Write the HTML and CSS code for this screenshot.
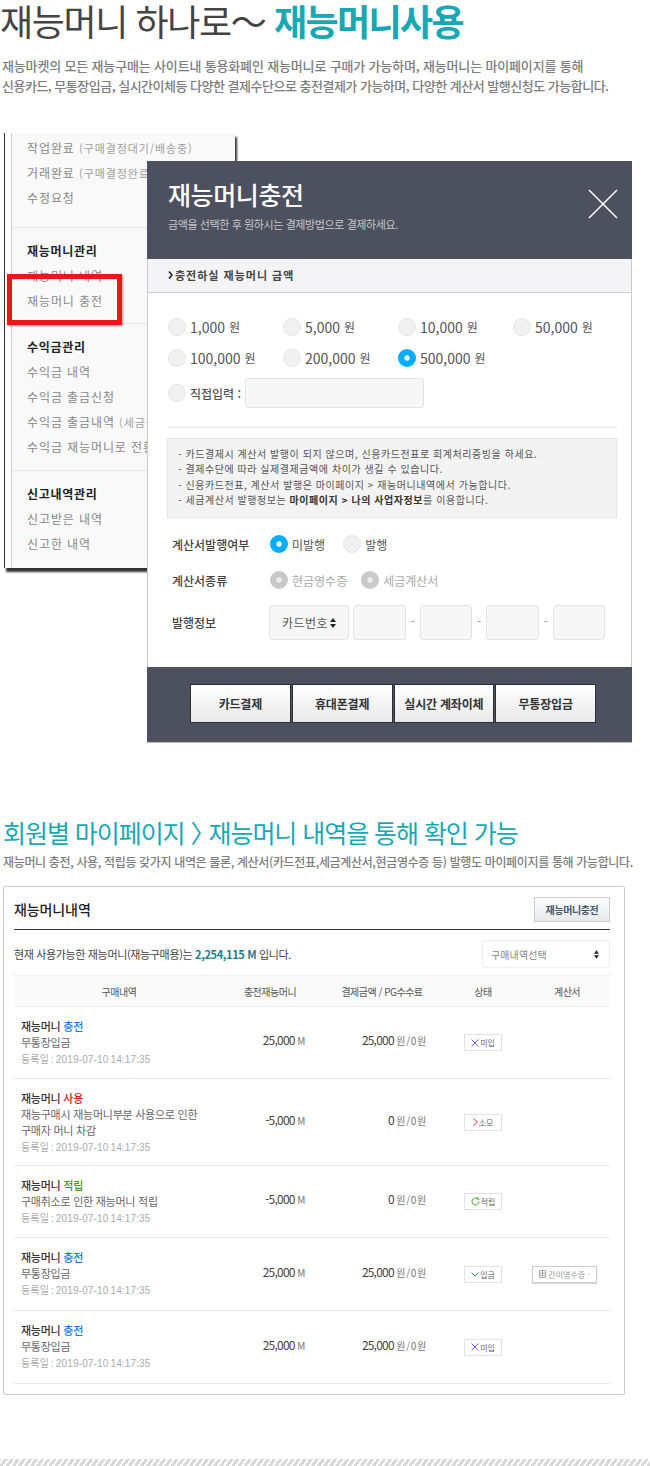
FILE: index.html
```html
<!DOCTYPE html>
<html lang="ko">
<head>
<meta charset="utf-8">
<meta name="viewport" content="width=device-width, initial-scale=1">
<link rel="stylesheet" href="styles.css">
</head>
<body>

<div class="hero">
  <h1>재능머니 하나로〜 <b>재능머니사용</b></h1>
  <p><span class="loose">재능마켓의 모든 재능구매는 사이트내 통용화폐인 재능머니로 구매가 가능하며, 재능머니는 마이페이지를 통해</span><br>
  신용카드, 무통장입금, 실시간이체등 다양한 결제수단으로 충전결제가 가능하며, 다양한 계산서 발행신청도 가능합니다.</p>
</div>

<div class="stage">
  <div class="menu">
    <ul class="menu-group first">
      <li>작업완료 <small>(구매결정대기/배송중)</small></li>
      <li>거래완료 <small>(구매결정완료)</small></li>
      <li>수정요청</li>
    </ul>
    <ul class="menu-group">
      <li class="head">재능머니관리</li>
      <li>재능머니 내역</li>
      <li>재능머니 충전</li>
    </ul>
    <ul class="menu-group">
      <li class="head">수익금관리</li>
      <li>수익금 내역</li>
      <li>수익금 출금신청</li>
      <li>수익금 출금내역 <small>(세금공제)</small></li>
      <li>수익금 재능머니로 전환</li>
    </ul>
    <ul class="menu-group">
      <li class="head">신고내역관리</li>
      <li>신고받은 내역</li>
      <li>신고한 내역</li>
    </ul>
  </div>
  <div class="redbox"></div>

  <div class="modal">
    <div class="modal-head">
      <div>
        <h3>재능머니충전</h3>
        <p>금액을 선택한 후 원하시는 결제방법으로 결제하세요.</p>
      </div>
      <svg class="close" width="30" height="30" viewBox="0 0 30 30"><path d="M1 1L29 29M29 1L1 29" stroke="#fff" stroke-width="1.5" fill="none"/></svg>
    </div>
    <div class="modal-bar">
      <svg width="5" height="8" viewBox="0 0 5 8"><path d="M1 .5L4 4L1 7.5" stroke="#222" stroke-width="1.6" fill="none"/></svg>
      충전하실 재능머니 금액
    </div>
    <div class="modal-body">
      <div class="amounts">
        <label><i class="radio"></i>1,000 <em>원</em></label>
        <label><i class="radio"></i>5,000 <em>원</em></label>
        <label><i class="radio"></i>10,000 <em>원</em></label>
        <label><i class="radio"></i>50,000 <em>원</em></label>
        <label><i class="radio"></i>100,000 <em>원</em></label>
        <label><i class="radio"></i>200,000 <em>원</em></label>
        <label><i class="radio on"></i>500,000 <em>원</em></label>
      </div>
      <div class="direct">
        <label><i class="radio"></i><em>직접입력 :</em></label>
        <span class="box direct-input"></span>
      </div>
      <div class="rule"></div>
      <div class="note">
        - 카드결제시 계산서 발행이 되지 않으며, 신용카드전표로 회계처리증빙을 하세요.<br>
        - 결제수단에 따라 실제결제금액에 차이가 생길 수 있습니다.<br>
        - 신용카드전표, 계산서 발행은 마이페이지 &gt; 재능머니내역에서 가능합니다.<br>
        - 세금계산서 발행정보는 <b>마이페이지 &gt; 나의 사업자정보</b>를 이용합니다.
      </div>
      <div class="form-row first">
        <span class="form-label">계산서발행여부</span>
        <label><i class="radio on"></i>미발행</label>
        <label><i class="radio"></i>발행</label>
      </div>
      <div class="form-row second">
        <span class="form-label">계산서종류</span>
        <label class="disabled"><i class="radio off"></i>현금영수증</label>
        <label class="disabled"><i class="radio off"></i>세금계산서</label>
      </div>
      <div class="form-row third">
        <span class="form-label">발행정보</span>
        <span class="box card-select">카드번호
          <svg width="6" height="10" viewBox="0 0 6 10"><path d="M3 0L6 4H0ZM3 10L0 6H6Z" fill="#222"/></svg>
        </span>
        <span class="box card-num"></span><span class="dash">-</span>
        <span class="box card-num"></span><span class="dash">-</span>
        <span class="box card-num"></span><span class="dash">-</span>
        <span class="box card-num"></span>
      </div>
    </div>
    <div class="modal-foot">
      <button>카드결제</button>
      <button>휴대폰결제</button>
      <button>실시간 계좌이체</button>
      <button>무통장입금</button>
    </div>
  </div>
</div>

<div class="section">
  <h2>회원별 마이페이지 <span class="gt">〉</span> 재능머니 내역을 통해 확인 가능</h2>
  <p>재능머니 충전, 사용, 적립등 갖가지 내역은 물론, 계산서(카드전표,세금계산서,현금영수증 등) 발행도 마이페이지를 통해 가능합니다.</p>
</div>

<div class="card">
  <div class="card-head">
    <h4>재능머니내역</h4>
    <span class="charge-btn">재능머니충전</span>
  </div>
  <div class="card-info">
    <span>현재 사용가능한 재능머니(재능구매용)는 <b>2,254,115 M</b> 입니다.</span>
    <span class="history-select">구매내역선택
      <svg width="5" height="9" viewBox="0 0 6 10"><path d="M3 0L6 4H0ZM3 10L0 6H6Z" fill="#222"/></svg>
    </span>
  </div>
  <table>
    <thead>
      <tr><th>구매내역</th><th>충전재능머니</th><th>결제금액 / PG수수료</th><th>상태</th><th>계산서</th></tr>
    </thead>
    <tbody>
      <tr>
        <td class="item"><b>재능머니 <span class="blue">충전</span></b><p>무통장입금</p><small>등록일 : 2019-07-10 14:17:35</small></td>
        <td class="money">25,000 <em>M</em></td>
        <td class="pay">25,000 <em>원 / 0 원</em></td>
        <td class="state"><span class="badge"><svg width="8" height="8" viewBox="0 0 8 8"><path d="M.5 .5L7.5 7.5M7.5 .5L.5 7.5" stroke="#7b5cf0" fill="none"/></svg>미입</span></td>
        <td></td>
      </tr>
      <tr class="two-line">
        <td class="item"><b>재능머니 <span class="red">사용</span></b><p>재능구매시 재능머니부분 사용으로 인한<br>구매자 머니 차감</p><small>등록일 : 2019-07-10 14:17:35</small></td>
        <td class="money">-5,000 <em>M</em></td>
        <td class="pay">0 <em>원 / 0 원</em></td>
        <td class="state"><span class="badge"><svg width="5" height="8" viewBox="0 0 5 8"><path d="M.5 .5L4.5 4L.5 7.5" stroke="#ee3344" fill="none"/></svg>소모</span></td>
        <td></td>
      </tr>
      <tr>
        <td class="item"><b>재능머니 <span class="green">적립</span></b><p>구매취소로 인한 재능머니 적립</p><small>등록일 : 2019-07-10 14:17:35</small></td>
        <td class="money">-5,000 <em>M</em></td>
        <td class="pay">0 <em>원 / 0 원</em></td>
        <td class="state"><span class="badge"><svg width="9" height="9" viewBox="0 0 9 9"><path d="M8 4.5A3.5 3.5 0 1 1 6.500 1.600M6.500 .2V2.300H8.500" stroke="#44aa22" fill="none"/></svg>적립</span></td>
        <td></td>
      </tr>
      <tr>
        <td class="item"><b>재능머니 <span class="blue">충전</span></b><p>무통장입금</p><small>등록일 : 2019-07-10 14:17:35</small></td>
        <td class="money">25,000 <em>M</em></td>
        <td class="pay">25,000 <em>원 / 0 원</em></td>
        <td class="state"><span class="badge"><svg width="8" height="5" viewBox="0 0 8 5"><path d="M.5 .5L4 4L7.500 .5" stroke="#3388dd" fill="none"/></svg>입금</span></td>
        <td class="tax"><span class="tax-btn"><svg width="7" height="8" viewBox="0 0 7 8"><path d="M.5 .5H6.500V7.500H.5ZM.5 3H6.500M.5 5.200H6.500M3.500 .5V7.500" stroke="#999" stroke-width=".8" fill="none"/></svg>간이영수증 ·</span></td>
      </tr>
      <tr>
        <td class="item"><b>재능머니 <span class="blue">충전</span></b><p>무통장입금</p><small>등록일 : 2019-07-10 14:17:35</small></td>
        <td class="money">25,000 <em>M</em></td>
        <td class="pay">25,000 <em>원 / 0 원</em></td>
        <td class="state"><span class="badge"><svg width="8" height="8" viewBox="0 0 8 8"><path d="M.5 .5L7.5 7.5M7.5 .5L.5 7.5" stroke="#7b5cf0" fill="none"/></svg>미입</span></td>
        <td></td>
      </tr>
    </tbody>
  </table>
</div>

<div class="stripe"></div>

</body>
</html>
```

FILE: styles.css
```css
html {
  box-sizing: border-box;
}

*, *:before, *:after {
  box-sizing: inherit;
}

body {
  margin: 0;
  width: 650px;
  height: 1466px;
  overflow: hidden;
  background: #fff;
  color: #444;
  font-family: "Noto Sans CJK KR", "Noto Sans", sans-serif;
  font-size: 12px;
}

h1, h2, h3, h4, p, ul {
  margin: 0;
  padding: 0;
}

em, i {
  font-style: normal;
}

/* top text */
.hero {
  height: 133px;
}

.hero h1 {
  height: 46px;
  font-size: 36px;
  line-height: 40px;
  font-weight: 400;
  letter-spacing: -1.4px;
  color: #444;
  white-space: nowrap;
}

.hero h1 b {
  font-weight: 700;
  color: #19a8b3;
  letter-spacing: -1.6px;
}

.hero p {
  margin: 10px 0 0 2px;
  font-size: 13px;
  line-height: 20px;
  font-weight: 500;
  color: #7d7d7d;
  letter-spacing: -.5px;
  white-space: nowrap;
}

.hero .loose {
  letter-spacing: -.16px;
}

/* left menu + popup */
.stage {
  position: relative;
  height: 610px;
}

.menu {
  width: 231px;
  height: 435px;
  margin-left: 4px;
  padding-left: 7px;
  border-left: 1px solid #333;
  box-shadow: 2px 4px 2px #333;
  background: #fff;
}

.menu-group {
  list-style: none;
  height: 96px;
  padding: 2px 0 0 15px;
  border-left: 1px solid #ccc;
  border-bottom: 1px solid #e4e4e4;
  background: #f9f9f9;
  margin-left: -1px;
}

.menu-group.first {
  height: 95px;
}

.menu-group:nth-child(3) {
  height: 147px;
}

.menu-group:last-child {
  height: 97px;
  border-bottom: 0;
}

.menu-group li {
  height: 25px;
  line-height: 25px;
  font-size: 12px;
  letter-spacing: .9px;
  color: #888;
  white-space: nowrap;
}

.menu-group small {
  font-size: 11px;
  color: #a0a0a0;
}

.menu-group .head {
  margin-top: 8px;
  font-weight: 700;
  letter-spacing: .7px;
  color: #222;
}

.redbox {
  position: absolute;
  left: 7px;
  top: 141px;
  width: 115px;
  height: 51px;
  border: 5px solid #e71818;
  box-shadow: 1px 1px 2px rgba(0, 0, 0, .4);
}

.modal {
  position: absolute;
  left: 147px;
  top: 28px;
  width: 485px;
}

.modal-head {
  display: flex;
  justify-content: space-between;
  height: 98px;
  padding: 15px 14px 0 21px;
  background: #4d505e;
  color: #fff;
}

.modal-head h3 {
  font-size: 25px;
  line-height: 36px;
  font-weight: 500;
  letter-spacing: -.4px;
}

.modal-head p {
  margin-top: 3px;
  font-size: 11px;
  line-height: 18px;
  color: #c6c7cc;
  letter-spacing: -.4px;
}

.close {
  margin-top: 13px;
}

.modal-bar {
  display: flex;
  align-items: center;
  gap: 2px;
  height: 34px;
  padding: 0 0 2px 20px;
  background: #f4f4f6;
  border: 1px solid #ccc;
  border-width: 0 1px 1px;
  font-size: 11px;
  font-weight: 700;
  color: #444;
  letter-spacing: 1px;
}

.modal-body {
  height: 374px;
  padding: 25px 14px 0 20px;
  border: 1px solid #ccc;
  border-width: 0 1px;
  background: #fff;
}

.modal-body label {
  display: flex;
  align-items: center;
  white-space: nowrap;
}

.amounts {
  display: grid;
  grid-template-columns: repeat(4, 115px);
  row-gap: 13px;
  font-size: 14px;
  line-height: 18px;
  color: #555;
}

.amounts em {
  font-size: 12px;
  margin-left: 4px;
}

.radio {
  display: inline-block;
  flex: none;
  width: 18px;
  height: 18px;
  margin-right: 4px;
  border: 1px solid #e6e6e6;
  border-radius: 50%;
  background: #f1f1f1;
}

.radio.on, .radio.off {
  border: 0;
  background: radial-gradient(circle, #fff 0, #fff 2.2px, #00aeff 3.2px);
}

.radio.off {
  background: radial-gradient(circle, #eee 0, #eee 2.2px, #c9c9c9 3.2px);
}

.box {
  display: inline-block;
  border: 1px solid #e4e4e4;
  border-radius: 3px;
  background: #f7f7f7;
}

.direct {
  display: flex;
  align-items: center;
  gap: 4px;
  margin-top: 11px;
  font-size: 12px;
  color: #555;
}

.direct em {
  font-weight: 500;
}

.direct-input {
  width: 179px;
  height: 30px;
}

.rule {
  height: 1px;
  margin: 19px 0 10px;
  background: #e4e4e4;
}

.note {
  height: 80px;
  margin-left: -1px;
  padding: 7px 10px 0 10px;
  border: 1px solid #e4e4e4;
  background: #f3f3f3;
  font-size: 10px;
  line-height: 15.3px;
  color: #555;
  letter-spacing: .55px;
  white-space: nowrap;
}

.note b {
  color: #333;
}

.form-row {
  display: flex;
  align-items: center;
  margin-left: 4px;
  font-size: 12px;
  color: #555;
}

.form-row.first {
  margin-top: 17px;
  gap: 18px;
}

.form-row.second {
  margin-top: 18px;
  gap: 14px;
}

.form-row.third {
  margin-top: 16px;
}

.form-label {
  width: 98px;
  color: #444;
  font-weight: 500;
}

.form-row.first .form-label {
  margin-right: -18px;
}

.form-row.second .form-label {
  margin-right: -14px;
}

.form-row.third .form-label {
  width: 97px;
}

.disabled {
  color: #aaa;
}

.card-select {
  display: flex;
  align-items: center;
  justify-content: center;
  gap: 2px;
  width: 80px;
  height: 35px;
  margin-right: 4px;
  font-size: 12px;
  letter-spacing: .5px;
}

.card-num {
  width: 52.5px;
  height: 35px;
}

.dash {
  width: 14px;
  text-align: center;
  color: #999;
  margin-top: -4px;
}

.modal-foot {
  display: flex;
  justify-content: center;
  gap: 1px;
  height: 76px;
  padding: 17px 36px 0 43px;
  background: #4d505e;
  border-bottom: 1px solid #bbb;
}

.modal-foot button {
  width: 101px;
  height: 39px;
  padding: 0;
  border: 1px solid #2e3038;
  background: linear-gradient(#fff, #e8e8e8);
  color: #333;
  font-family: inherit;
  font-size: 12px;
  font-weight: 700;
  letter-spacing: -.2px;
  white-space: nowrap;
}

/* lower text */
.section {
  height: 73px;
  margin-top: 70px;
  padding-left: 3px;
}

.section h2 {
  font-size: 25px;
  line-height: 38px;
  font-weight: 400;
  letter-spacing: -1.05px;
  color: #19a8b3;
  white-space: nowrap;
}

.section .gt {
  letter-spacing: -13px;
}

.section p {
  margin-top: 1px;
  font-size: 12px;
  line-height: 20px;
  font-weight: 500;
  letter-spacing: -.35px;
  color: #7d7d7d;
  white-space: nowrap;
}

/* history card */
.card {
  width: 622px;
  height: 509px;
  margin-left: 3px;
  padding: 10px 14px 0 10px;
  border: 1px solid #ccc;
  border-radius: 2px;
}

.card-head {
  display: flex;
  justify-content: space-between;
  align-items: center;
  height: 33px;
  padding-bottom: 8px;
  border-bottom: 1px solid #333;
}

.card-head h4 {
  font-size: 14px;
  font-weight: 500;
  color: #222;
  letter-spacing: -.1px;
}

.charge-btn {
  width: 76px;
  height: 25px;
  line-height: 23px;
  text-align: center;
  border: 1px solid #ccc;
  background: linear-gradient(#fff, #e6e8ea);
  font-size: 10px;
  font-weight: 700;
  color: #456;
  letter-spacing: -.4px;
}

.card-info {
  display: flex;
  justify-content: space-between;
  align-items: center;
  height: 28px;
  margin-top: 10px;
  font-size: 11px;
  letter-spacing: -.35px;
  color: #444;
}

.card-info b {
  color: #14808a;
  font-weight: 700;
}

.history-select {
  display: flex;
  justify-content: space-between;
  align-items: center;
  width: 128px;
  height: 28px;
  padding: 0 10px 0 8px;
  border: 1px solid #eee;
  border-radius: 2px;
  color: #888;
  font-size: 10px;
  letter-spacing: .1px;
}

table {
  width: 596px;
  margin-top: 7px;
  border-collapse: collapse;
  table-layout: fixed;
}

th {
  height: 31px;
  padding: 0;
  background: #fafafa;
  border: 1px solid #eee;
  border-width: 1px 0;
  font-size: 10px;
  font-weight: 400;
  color: #555;
  letter-spacing: -.5px;
}

th:nth-child(1) { width: 210px; }
th:nth-child(2) { width: 92px; }
th:nth-child(3) { width: 132px; }
th:nth-child(4) { width: 70px; }
th:nth-child(5) { padding-left: 6px; }

td {
  padding: 0;
  border-bottom: 1px solid #e8e8e8;
}

td.item {
  padding: 11px 0 10px 7px;
  font-size: 11px;
  line-height: 16px;
  letter-spacing: -.25px;
  color: #666;
}

.two-line td.item {
  padding-bottom: 9px;
}

tr:nth-child(n+4) td.item {
  padding-bottom: 11px;
}

td.item b {
  font-weight: 500;
  color: #333;
}

td.item p {
  line-height: 16px;
  white-space: nowrap;
}

td.item small {
  display: block;
  margin-top: 2px;
  font-family: "Liberation Sans", "Noto Sans CJK KR", sans-serif;
  font-size: 10px;
  letter-spacing: .15px;
  word-spacing: -1px;
  color: #aaa;
}

.blue { color: #0a7cf0; }
.red { color: #f01010; }
.green { color: #3c9a10; }

td.money, td.pay {
  padding-bottom: 6px;
  text-align: right;
  font-size: 12px;
  letter-spacing: -.8px;
  color: #444;
}

td.money { padding-right: 11px; }
td.pay { padding-right: 22px; }

td.money em, td.pay em {
  font-size: 10px;
  color: #777;
  letter-spacing: -.3px;
  word-spacing: -1.5px;
}

td.state {
  padding-left: 16px;
}

.badge {
  display: flex;
  align-items: center;
  justify-content: center;
  gap: 1px;
  width: 38px;
  height: 17px;
  border: 1px solid #e2e2e2;
  font-size: 8px;
  color: #666;
}

td.tax {
  padding-left: 14px;
}

.tax-btn {
  display: flex;
  align-items: center;
  justify-content: center;
  gap: 2px;
  width: 65px;
  height: 17px;
  border: 1px solid #ccc;
  box-shadow: 0 1px 1px #ddd;
  font-size: 8px;
  color: #999;
  white-space: nowrap;
}

.stripe {
  height: 7px;
  margin-top: 64px;
  background: repeating-linear-gradient(-55deg, #d8d8d8 0, #d8d8d8 3px, #fff 3px, #fff 5px);
}
```
